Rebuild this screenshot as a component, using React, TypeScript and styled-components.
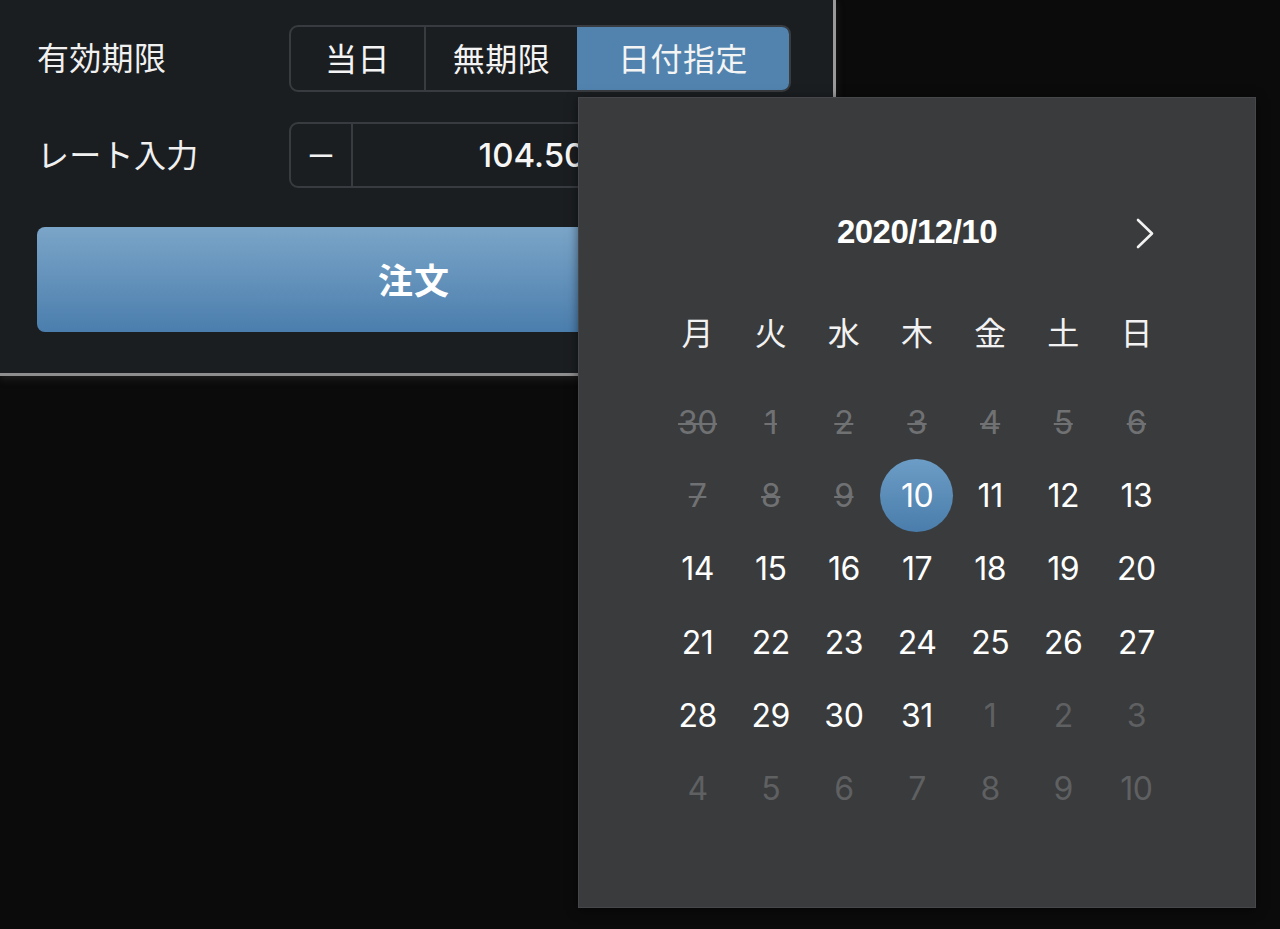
import React from "react";
import styled, { createGlobalStyle } from "styled-components";

const GlobalStyle = createGlobalStyle`
  html, body {
    margin: 0;
    padding: 0;
    background: #0b0b0b;
  }
  body {
    font-family: "Liberation Sans", "Noto Sans CJK JP", sans-serif;
    color: #f2f2f2;
  }
  * { box-sizing: border-box; }
`;

const Screen = styled.div`
  position: relative;
  width: 1280px;
  height: 929px;
  overflow: hidden;
  background: #0b0b0b;
`;

const Panel = styled.section`
  width: 836px;
  background: #1b1e21;
  border-right: 3px solid #9a9a9a;
  border-bottom: 3px solid #8e8e8e;
  box-shadow: 0 3px 8px rgba(70, 70, 70, 0.35);
  padding: 25px 42px 41px 37px;
  display: grid;
  grid-template-columns: 252px 502px;
  row-gap: 30px;
  align-items: center;
`;

const Label = styled.div<{ $indent?: number }>`
  font-family: "Noto Sans CJK JP", sans-serif;
  font-size: 32px;
  line-height: 1.3;
  color: #f0f0f0;
  padding-left: ${(p) => p.$indent ?? 0}px;
  letter-spacing: 0.3px;
  margin-top: -3px;
`;

const Segmented = styled.div`
  display: flex;
  height: 67px;
  border: 2px solid #383b3f;
  border-radius: 9px;
  overflow: hidden;
`;

const SegButton = styled.div<{ $w: number; $active?: boolean; $divider?: boolean }>`
  width: ${(p) => p.$w}px;
  flex: ${(p) => (p.$active ? "1" : "none")};
  display: flex;
  align-items: center;
  justify-content: center;
  padding-bottom: 3px;
  font-family: "Noto Sans CJK JP", sans-serif;
  font-size: 32px;
  letter-spacing: 0.5px;
  color: #f4f4f4;
  background: ${(p) => (p.$active ? "#5183ae" : "transparent")};
  border-left: ${(p) => (p.$divider ? "2px solid #383b3f" : "none")};
`;

const InputGroup = styled.div`
  display: flex;
  height: 66px;
  border: 2px solid #383b3f;
  border-radius: 9px;
  overflow: hidden;
`;

const StepButton = styled.div<{ $side: "left" | "right" }>`
  width: 62px;
  display: flex;
  align-items: center;
  justify-content: center;
  font-family: "Noto Sans CJK JP", sans-serif;
  font-size: 28px;
  color: #f2f2f2;
  ${(p) =>
    p.$side === "left"
      ? "border-right: 2px solid #383b3f;"
      : "border-left: 2px solid #383b3f;"}
`;

const Value = styled.div`
  flex: 1;
  display: flex;
  align-items: center;
  justify-content: center;
  padding-right: 16px;
  font-family: "Inter", "Liberation Sans", sans-serif;
  font-weight: 500;
  font-size: 33px;
  color: #f6f6f6;
`;

const OrderButton = styled.button`
  grid-column: 1 / span 2;
  margin-top: 9px;
  height: 105px;
  padding-bottom: 4px;
  border: none;
  border-radius: 8px;
  background: linear-gradient(180deg, #7ba5c8 0%, #4b7ead 100%);
  color: #ffffff;
  font-family: "Noto Sans CJK JP", sans-serif;
  font-weight: 700;
  font-size: 35px;
  letter-spacing: 1px;
  cursor: pointer;
`;

const Popup = styled.div`
  position: absolute;
  left: 578px;
  top: 97px;
  width: 678px;
  height: 811px;
  background: #3a3b3d;
  border: 1px solid #46474a;
  box-shadow: 0 2px 10px rgba(0, 0, 0, 0.5);
  padding: 100px 82px 0 82px;
`;

const Header = styled.div`
  display: grid;
  grid-template-columns: repeat(7, 1fr);
  height: 68px;
  align-items: center;
`;

const Title = styled.div`
  grid-column: 2 / span 5;
  text-align: center;
  font-family: "Liberation Sans", sans-serif;
  font-weight: 700;
  font-size: 33px;
  letter-spacing: -0.5px;
  color: #ffffff;
`;

const NavButton = styled.div`
  grid-column: 7;
  display: flex;
  align-items: center;
  justify-content: center;
  padding-left: 17px;
  padding-top: 2px;
`;

const Weekdays = styled.div`
  display: grid;
  grid-template-columns: repeat(7, 1fr);
  height: 74px;
  margin-top: 28px;
  align-items: center;
`;

const Weekday = styled.div`
  text-align: center;
  font-family: "Noto Sans CJK JP", sans-serif;
  font-size: 32px;
  color: #f2f2f2;
`;

const Days = styled.div`
  display: grid;
  grid-template-columns: repeat(7, 1fr);
  grid-auto-rows: 73.2px;
  margin-top: 18px;
`;

type DayKind = "past" | "normal" | "selected" | "next";

const Day = styled.div`
  display: flex;
  align-items: center;
  justify-content: center;
`;

const DayNum = styled.span<{ $kind: DayKind }>`
  display: flex;
  align-items: center;
  justify-content: center;
  width: 73px;
  height: 73px;
  border-radius: 50%;
  font-family: "Inter", "Liberation Sans", sans-serif;
  font-size: 32px;
  letter-spacing: -0.5px;
  color: ${(p) =>
    p.$kind === "past"
      ? "#707173"
      : p.$kind === "next"
      ? "#5f6062"
      : "#ffffff"};
  text-decoration: ${(p) => (p.$kind === "past" ? "line-through" : "none")};
  text-decoration-thickness: 2px;
  background: ${(p) =>
    p.$kind === "selected"
      ? "linear-gradient(180deg, #6c9dc6 0%, #4a7dab 100%)"
      : "transparent"};
`;

const ChevronRight = () => (
  <svg width="20" height="31" viewBox="0 0 20 31" fill="none">
    <polyline
      points="3,2 17,15.5 3,29"
      stroke="#f2f2f2"
      strokeWidth="2.6"
      strokeLinecap="round"
      strokeLinejoin="round"
    />
  </svg>
);

const weekdays = ["月", "火", "水", "木", "金", "土", "日"];

const days: { n: number; k: DayKind }[] = [
  { n: 30, k: "past" },
  ...[1, 2, 3, 4, 5, 6, 7, 8, 9].map((n) => ({ n, k: "past" as DayKind })),
  { n: 10, k: "selected" },
  ...Array.from({ length: 21 }, (_, i) => ({ n: 11 + i, k: "normal" as DayKind })),
  ...Array.from({ length: 10 }, (_, i) => ({ n: 1 + i, k: "next" as DayKind })),
];

export default function App() {
  return (
    <>
      <GlobalStyle />
      <Screen>
        <Panel>
          <Label>有効期限</Label>
          <Segmented>
            <SegButton $w={133}>当日</SegButton>
            <SegButton $w={153} $divider>
              無期限
            </SegButton>
            <SegButton $w={214} $active>
              日付指定
            </SegButton>
          </Segmented>
          <Label $indent={0}>レート入力</Label>
          <InputGroup>
            <StepButton $side="left">ー</StepButton>
            <Value>104.50</Value>
            <StepButton $side="right">＋</StepButton>
          </InputGroup>
          <OrderButton>注文</OrderButton>
        </Panel>
        <Popup>
          <Header>
            <Title>2020/12/10</Title>
            <NavButton>
              <ChevronRight />
            </NavButton>
          </Header>
          <Weekdays>
            {weekdays.map((w) => (
              <Weekday key={w}>{w}</Weekday>
            ))}
          </Weekdays>
          <Days>
            {days.map((d, i) => (
              <Day key={i}>
                <DayNum $kind={d.k}>{d.n}</DayNum>
              </Day>
            ))}
          </Days>
        </Popup>
      </Screen>
    </>
  );
}
